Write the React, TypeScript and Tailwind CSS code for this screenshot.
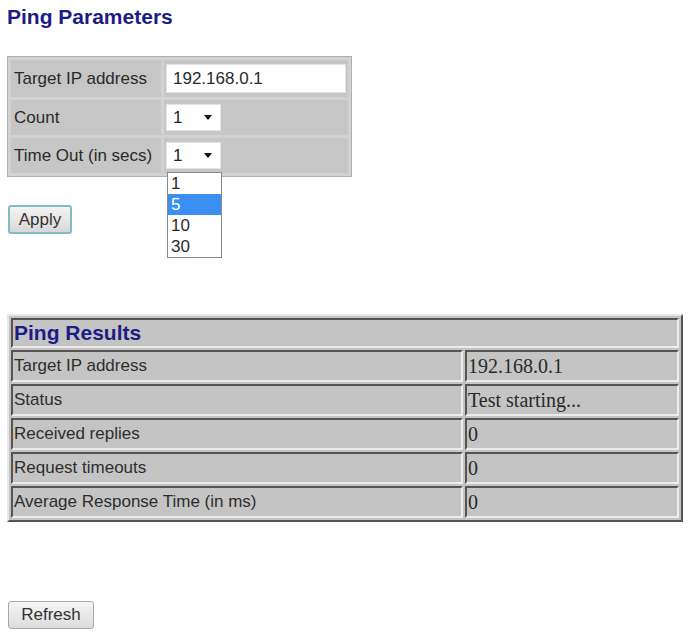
import React from "react";

const sans = "font-['Liberation_Sans',Arial,sans-serif]";

const resultRows = [
  ["Target IP address", "192.168.0.1"],
  ["Status", "Test starting..."],
  ["Received replies", "0"],
  ["Request timeouts", "0"],
  ["Average Response Time (in ms)", "0"],
];

function SelectBox({ value }: { value: string }) {
  return (
    <div className="w-[55px] h-[27px] bg-white border border-[#e4e4e4] flex items-center justify-between pl-[6px] pr-[8px] text-[17px] text-[#222]">
      <span>{value}</span>
      <span className="w-0 h-0 border-l-[4px] border-r-[4px] border-t-[5px] border-l-transparent border-r-transparent border-t-[#111]" />
    </div>
  );
}

export default function App() {
  return (
    <div className={`${sans} bg-white min-h-[634px] pl-[7px] pr-[7px] text-[#2a2a2a]`}>
      <h1 className="mt-[5px] text-[21px] leading-[24px] font-bold text-[#1c1c84]">Ping Parameters</h1>

      {/* parameter form */}
      <table className="mt-[27px] border-separate border-spacing-[3px] bg-[#d2d2d2] border border-[#b0b0b0] text-[17px]">
        <tbody>
          <tr>
            <td className="w-[150px] h-[37px] bg-[#c6c6c6] pl-[3px] whitespace-nowrap">Target IP address</td>
            <td className="w-[184px] h-[37px] bg-[#c6c6c6] pl-[2px]">
              <div className="w-[180px] h-[29px] bg-white border border-[#e2e2e2] flex items-center pl-[6px]">192.168.0.1</div>
            </td>
          </tr>
          <tr>
            <td className="h-[35px] bg-[#c6c6c6] pl-[3px]">Count</td>
            <td className="h-[35px] bg-[#c6c6c6] pl-[2px]">
              <SelectBox value="1" />
            </td>
          </tr>
          <tr>
            <td className="h-[35px] bg-[#c6c6c6] pl-[3px] whitespace-nowrap">Time Out (in secs)</td>
            <td className="h-[35px] bg-[#c6c6c6] pl-[2px] relative">
              <SelectBox value="1" />
              {/* open option list */}
              <ul className="absolute left-[3px] top-[34px] w-[55px] bg-white border border-[#8a8a8a] text-[17px] leading-[21px] z-10">
                <li className="pl-[3px]">1</li>
                <li className="pl-[3px] bg-[#3b8ff0] text-white">5</li>
                <li className="pl-[3px]">10</li>
                <li className="pl-[3px]">30</li>
              </ul>
            </td>
          </tr>
        </tbody>
      </table>

      <button className="mt-[28px] ml-[1px] w-[64px] h-[29px] rounded-[3px] border-2 border-[#7fbcc8] bg-gradient-to-b from-[#f4f4f4] to-[#d8d8d8] text-[17px] text-[#333] block">
        Apply
      </button>

      {/* results grid */}
      <table className="mt-[80px] w-[676px] border-separate border-spacing-[2px] bg-[#c4c4c4] border-2 border-t-[#e8e8e8] border-l-[#e8e8e8] border-b-[#555] border-r-[#555]">
        <tbody>
          <tr>
            <td
              colSpan={2}
              className="h-[30px] bg-[#c4c4c4] border-2 border-t-[#555] border-l-[#555] border-b-[#ececec] border-r-[#ececec] pl-[1px] py-0 text-[21px] font-bold text-[#1c1c84] leading-[24px]"
            >
              Ping Results
            </td>
          </tr>
          {resultRows.map(([label, value]) => (
            <tr key={label}>
              <td className="w-[452px] h-[32px] py-0 bg-[#c4c4c4] border-2 border-t-[#555] border-l-[#555] border-b-[#ececec] border-r-[#ececec] pl-[1px] text-[17px] leading-[20px] text-[#2e2e2e]">
                {label}
              </td>
              <td className="h-[32px] py-0 bg-[#c4c4c4] border-2 border-t-[#555] border-l-[#555] border-b-[#ececec] border-r-[#ececec] pl-[1px] font-['Liberation_Serif','Times_New_Roman',serif] text-[20px] leading-[22px] text-[#2a2a2a]">
                {value}
              </td>
            </tr>
          ))}
        </tbody>
      </table>

      <button className="mt-[79px] ml-[1px] w-[86px] h-[28px] rounded-[3px] border border-[#a8a8a8] bg-gradient-to-b from-[#f6f6f6] to-[#dcdcdc] text-[17px] text-[#333] block">
        Refresh
      </button>
    </div>
  );
}
